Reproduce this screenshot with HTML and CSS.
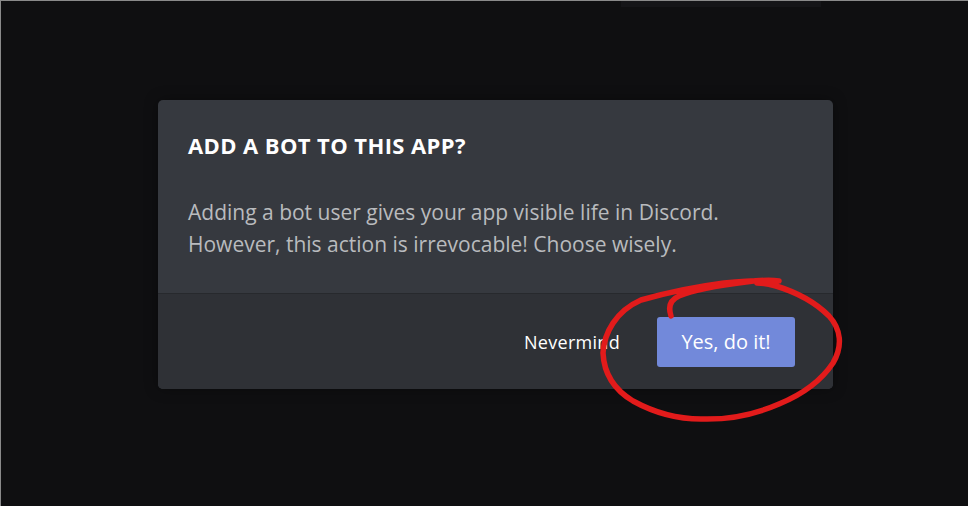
FILE: index.html
```html
<!DOCTYPE html>
<html>
<head>
<meta charset="utf-8">
<link rel="stylesheet" href="styles.css">
</head>
<body>
  <div class="topstrip"></div>
  <div class="modal">
    <div class="content">
      <h2 class="title">ADD A BOT TO THIS APP?</h2>
      <p class="desc">Adding a bot user gives your app visible life in Discord. However, this action is irrevocable! Choose wisely.</p>
    </div>
    <div class="footer">
      <button class="link-btn">Nevermind</button>
      <button class="primary-btn">Yes, do it!</button>
    </div>
  </div>
  <svg class="scribble" width="968" height="506" viewBox="0 0 968 506">
    <path d="M670 315 C667 306 669 299 678 295 C695 288 720 284 745 281 C760 279 772 279 778 280 C765 279 745 280 723 282 C700 285 668 291 640 299 C615 310 603 332 602 352 C603 372 612 388 632 400 C652 411 675 418 700 418 C730 419 755 413 778 403 C800 394 820 380 832 362 C842 345 840 328 828 315 C815 302 798 292 775 285 C768 283 762 282 756 282" fill="none" stroke="#e21b1b" stroke-width="5.5" stroke-linecap="round" stroke-linejoin="round"/>
  </svg>
</body>
</html>
```

FILE: styles.css
```css
html, body {
  margin: 0;
  padding: 0;
}
body {
  width: 968px;
  height: 506px;
  box-sizing: border-box;
  background: #0f0f11;
  border-top: 1px solid #8a8a8a;
  border-left: 1px solid #8a8a8a;
  padding: 99px 0 0 157px;
  position: relative;
  overflow: hidden;
  font-family: "Open Sans", "Lato", sans-serif;
}
.topstrip {
  position: absolute;
  top: 0;
  left: 620px;
  width: 200px;
  height: 6px;
  background: #151518;
}
.modal {
  width: 675px;
  border-radius: 5px;
  overflow: hidden;
  background: #36393f;
  box-shadow: 0 0 14px rgba(0,0,0,0.35);
}
.content {
  padding: 33px 30px 33px 30px;
  border-bottom: 1px solid #27292d;
}
.title {
  margin: 0;
  font-size: 22px;
  line-height: 24px;
  font-weight: 700;
  letter-spacing: 0.4px;
  color: #ffffff;
}
.desc {
  margin: 39px 0 0 0;
  font-size: 21px;
  line-height: 32px;
  color: #b9bbbe;
  width: 580px;
}
.footer {
  background: #2f3136;
  height: 95px;
  display: flex;
  align-items: center;
  justify-content: flex-end;
  padding: 0 38px 0 0;
  gap: 37px;
}
.link-btn {
  background: none;
  border: none;
  padding: 0;
  font-family: inherit;
  font-size: 18px;
  letter-spacing: 0.3px;
  color: #ffffff;
}
.primary-btn {
  width: 138px;
  height: 50px;
  border: none;
  border-radius: 3px;
  background: #7289da;
  color: #ffffff;
  font-family: inherit;
  font-size: 20px;
}
.scribble {
  position: absolute;
  left: 0;
  top: 0;
  pointer-events: none;
}
```
